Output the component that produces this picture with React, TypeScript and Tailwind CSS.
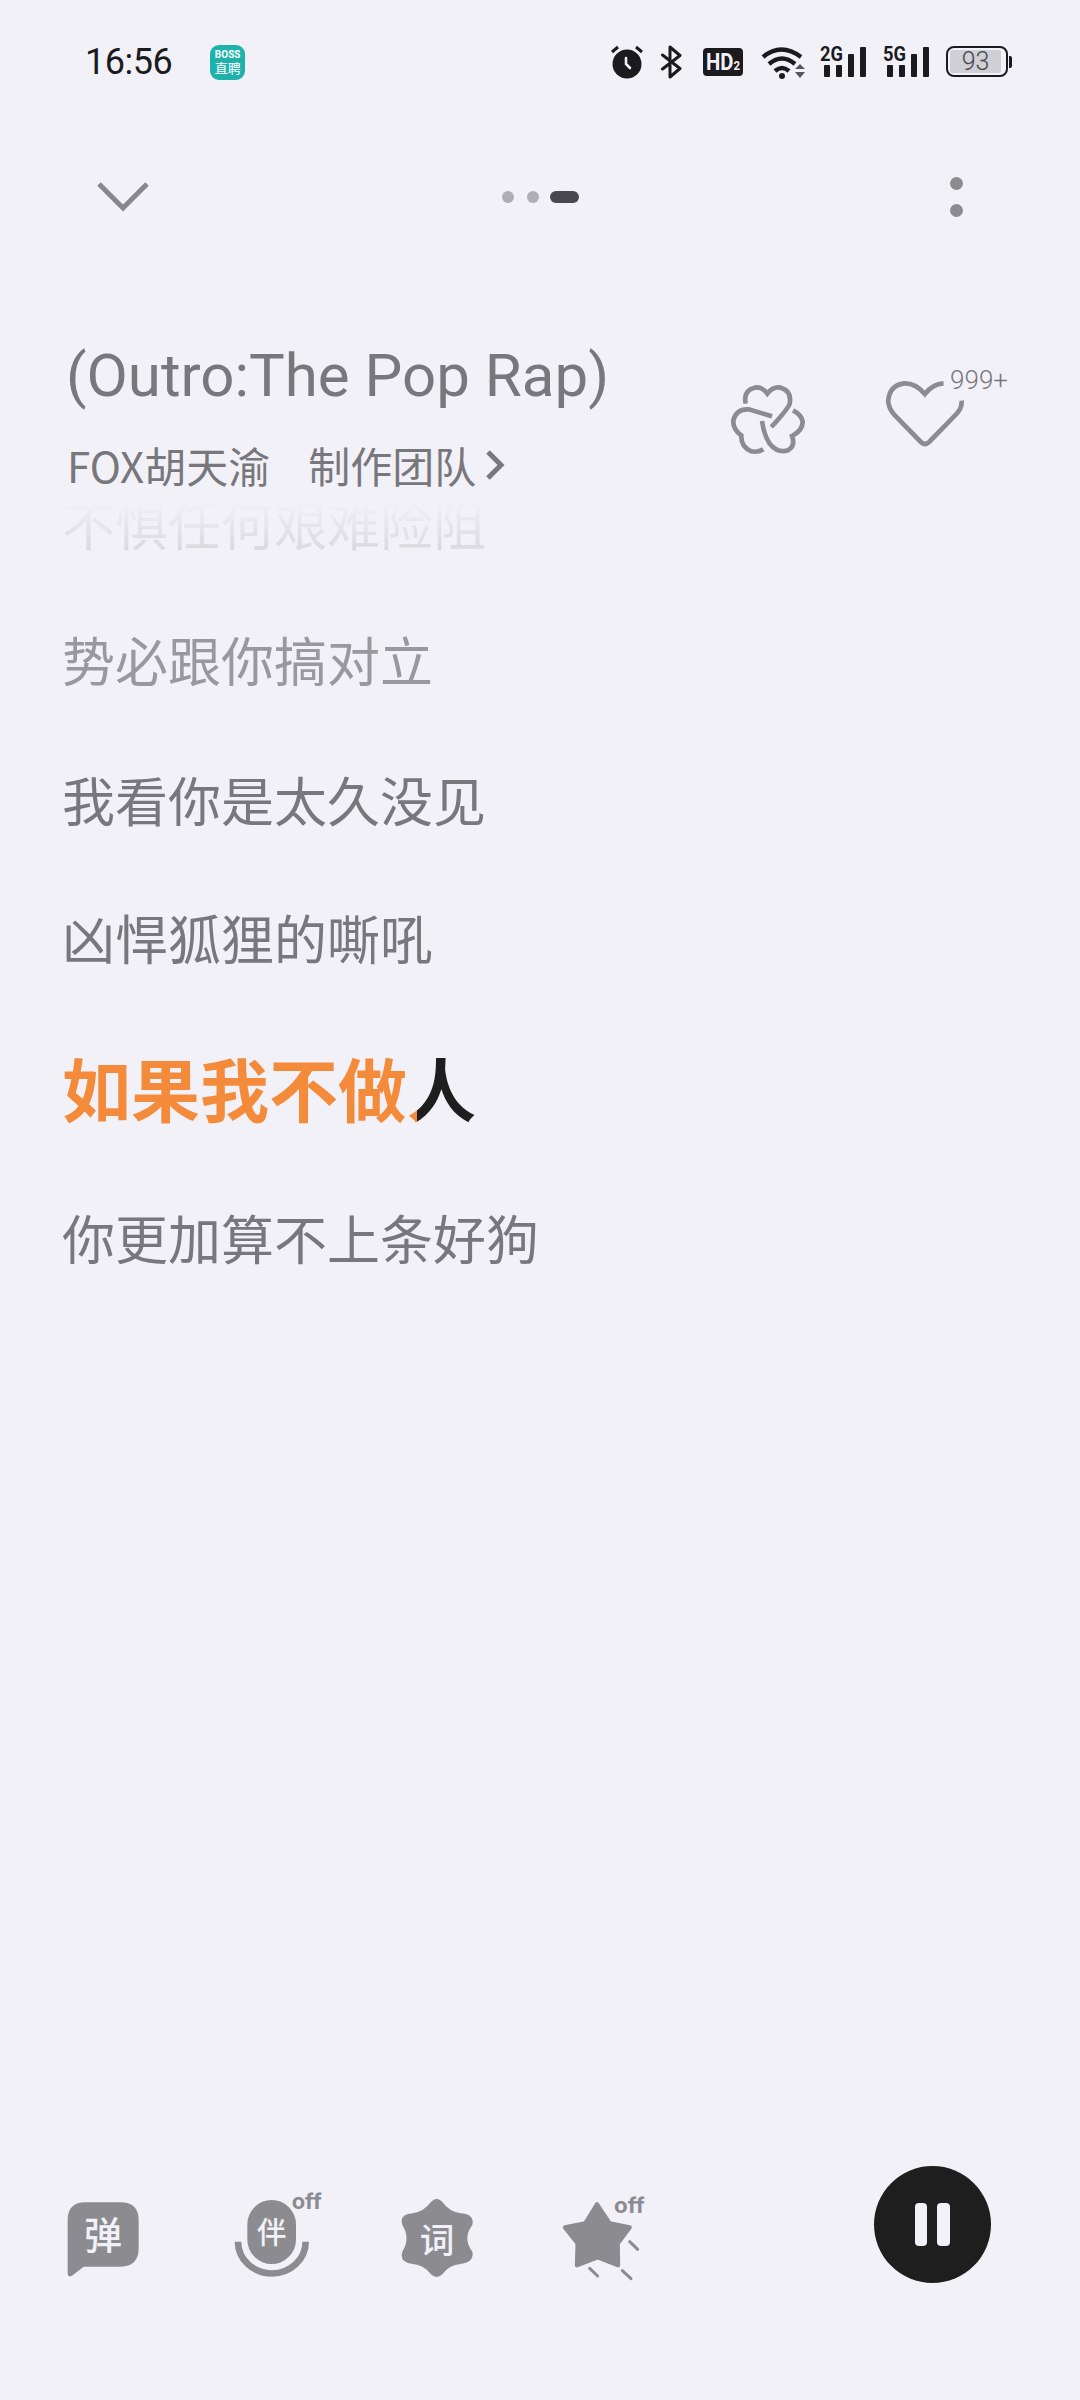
const cjk = '[font-family:"Noto_Sans_CJK_SC",Roboto,sans-serif]'

function Alarm() {
  return (
    <svg width="32" height="34" viewBox="0 0 32 34" fill="none">
      <circle cx="16" cy="19" r="14.5" fill="#1b1b1d" />
      <path d="M1 7 7 2M31 7 25 2" stroke="#1b1b1d" strokeWidth="3" />
      <path d="M15 13v6l4 4" stroke="#f2f1f8" strokeWidth="2.6" strokeLinecap="round" />
    </svg>
  )
}

function Bluetooth() {
  return (
    <svg width="21" height="34" viewBox="0 0 21 34" fill="none">
      <path d="M1.5 10 19 23.5 9 32V2l10 8.5L1.5 24" stroke="#1b1b1d" strokeWidth="3" strokeLinejoin="round" strokeLinecap="round" />
    </svg>
  )
}

function HdBadge() {
  return (
    <div className="w-[40px] h-[28px] rounded-[4px] bg-[#1b1b1d] flex items-center justify-center overflow-hidden">
      <svg width="40" height="28" viewBox="0 0 40 28">
        <text x="3" y="22" fontFamily="Roboto" fontWeight="700" fontSize="23" fill="#f2f1f8" textLength="34" lengthAdjust="spacingAndGlyphs">
          HD<tspan fontSize="13">2</tspan>
        </text>
      </svg>
    </div>
  )
}

function Wifi() {
  return (
    <svg width="45" height="34" viewBox="0 0 45 34" fill="none">
      <path d="M2 12Q20-3 40 12M8 19Q21 8 34 19M14 26Q21 20 28 26" stroke="#1b1b1d" strokeWidth="4.4" />
      <circle cx="21" cy="31" r="3" fill="#1b1b1d" />
      <path d="M34 24h10l-5-5zM34 27h10l-5 6z" fill="#56565a" />
    </svg>
  )
}

function Signal({ label }: { label: string }) {
  return (
    <svg className="overflow-visible" width="47" height="33" viewBox="0 0 47 33" fill="#1b1b1d">
      <text x="0" y="16" fontFamily="Roboto" fontWeight="700" fontSize="21" textLength="23" lengthAdjust="spacingAndGlyphs">{label}</text>
      <rect x="4" y="20" width="6" height="12" rx="1" />
      <rect x="16" y="20" width="6" height="12" rx="1" />
      <rect x="28" y="9" width="6" height="23" rx="1" />
      <rect x="40" y="2" width="6" height="30" rx="1" />
    </svg>
  )
}

function Battery() {
  return (
    <div className="flex items-center gap-[1px]">
      <div className="w-[62px] h-[31px] rounded-[8px] border-[2.5px] border-[#1b1b1d] p-[2px] flex">
        <div className="w-[51px] h-full rounded-[2px] bg-[#cfcfd6] flex items-center justify-center text-[25px] leading-none text-[#46464a] font-light [font-family:Roboto,sans-serif]">
          93
        </div>
      </div>
      <div className="w-[3px] h-[12px] rounded-r-[2px] bg-[#1b1b1d]" />
    </div>
  )
}

function Clover() {
  return (
    <svg width="80" height="75" viewBox="200 180 240 225" fill="none" stroke="#8b8b90" strokeWidth="14">
      <path d="M253 245Q245 205 280 197Q302 193 318 215Q335 193 358 197Q392 207 385 245Q382 258 330 315" />
      <path d="M332 283 262 262Q225 260 216 295Q214 322 240 340Q238 375 270 388Q290 392 306 382" />
      <path d="M302 297Q308 340 325 365Q350 395 380 385Q403 372 392 342Q425 325 424 298Q420 278 395 265" />
    </svg>
  )
}

function Heart() {
  return (
    <svg width="82" height="70" viewBox="670 170 245 210" fill="none" stroke="#8b8b90" strokeWidth="14">
      <path d="M848 186Q815 188 792 218Q765 185 730 186Q685 192 682 240Q684 262 700 280L780 362Q792 374 805 362L885 280Q905 260 902 238" />
    </svg>
  )
}

function Danmu() {
  return (
    <svg width="72" height="76" viewBox="110 186 216 228">
      <path d="M112 240Q112 187 165 187H270Q325 187 325 240V325Q325 380 270 380H160L125 407Q112 413 112 400Z" fill="#8b8b90" />
      <text x="218" y="328" textAnchor="middle" fontFamily="Noto Sans CJK SC" fontWeight="500" fontSize="114" fill="#f2f1f8">弹</text>
    </svg>
  )
}

function Mic() {
  return (
    <svg className="overflow-visible" width="88" height="88" viewBox="610 148 264 264" fill="none">
      <rect x="650" y="178" width="146" height="192" rx="73" fill="#8b8b90" />
      <path d="M622 303A101 95 0 0 0 825 303" stroke="#8b8b90" strokeWidth="20" />
      <text x="723" y="308" textAnchor="middle" fontFamily="Noto Sans CJK SC" fontWeight="500" fontSize="88" fill="#f2f1f8">伴</text>
      <text x="783" y="206" fontFamily="Inter" fontWeight="700" fontSize="66" fill="#8b8b90" textLength="90" lengthAdjust="spacingAndGlyphs">off</text>
    </svg>
  )
}

function Badge() {
  return (
    <svg width="72" height="80" viewBox="1111 174 216 240">
      <path d="M1200 187Q1218 165 1236 187Q1255 215 1290 220Q1332 222 1325 255Q1295 295 1325 335Q1332 368 1290 372Q1255 375 1236 402Q1218 420 1200 402Q1180 375 1146 372Q1105 368 1115 335Q1140 295 1115 255Q1105 222 1146 220Q1180 215 1200 187Z" fill="#8b8b90" />
      <text x="1219" y="338" textAnchor="middle" fontFamily="Noto Sans CJK SC" fontWeight="500" fontSize="104" fill="#f2f1f8">词</text>
    </svg>
  )
}

function Star() {
  return (
    <svg className="overflow-visible" width="84" height="87" viewBox="95 162 252 261" fill="none">
      <path d="M200 193 238 250 298 262 262 310 263 376 202 352 140 376 142 310 104 262 165 250Z" fill="#8b8b90" stroke="#8b8b90" strokeWidth="13" strokeLinejoin="round" />
      <path d="M298 305 322 328M178 385 202 408M276 392 302 416" stroke="#8b8b90" strokeWidth="9" strokeLinecap="round" />
      <text x="251" y="220" fontFamily="Inter" fontWeight="700" fontSize="66" fill="#8b8b90" textLength="92" lengthAdjust="spacingAndGlyphs">off</text>
    </svg>
  )
}

export default function App() {
  return (
    <div className={`w-[1080px] h-[2400px] bg-[#f2f1f8] flex flex-col overflow-hidden ${cjk}`}>
      {/* status bar */}
      <div className="h-[167px] pl-[85px] pr-[68px] pt-[44px] flex items-start justify-between">
        <div className="flex items-center h-[36px]">
          <span className="text-[36px] leading-none text-[#1b1b1d] tracking-[-0.5px] [font-family:Roboto,sans-serif]">16:56</span>
          <div className="ml-[38px] w-[35px] h-[35px] rounded-[9px] bg-[#1fb2ad] flex flex-col items-center justify-center text-white">
            <span className="text-[10px] leading-[11px] font-bold [font-family:Roboto,sans-serif]">BOSS</span>
            <span className="text-[13px] leading-[15px]">直聘</span>
          </div>
        </div>
        <div className="flex items-center h-[35px]">
          <Alarm />
          <div className="ml-[18px]"><Bluetooth /></div>
          <div className="ml-[21px]"><HdBadge /></div>
          <div className="ml-[18px]"><Wifi /></div>
          <div className="ml-[14px]"><Signal label="2G" /></div>
          <div className="ml-[16px]"><Signal label="5G" /></div>
          <div className="ml-[16px]"><Battery /></div>
        </div>
      </div>

      {/* top nav */}
      <div className="relative h-[60px] pl-[96px] pr-[117px] flex items-center justify-between">
        <svg width="54" height="32" viewBox="0 0 54 32" fill="none">
          <path d="M3 3 27 27 51 3" stroke="#87878c" strokeWidth="5" />
        </svg>
        <div className="absolute left-[502px] top-[24px] flex items-center gap-[13px]">
          <div className="w-[12px] h-[12px] rounded-full bg-[#aeaeb6]" />
          <div className="w-[12px] h-[12px] rounded-full bg-[#aeaeb6]" />
          <div className="-ml-[2px] w-[29px] h-[12px] rounded-full bg-[#48484e]" />
        </div>
        <div className="flex flex-col gap-[14px]">
          <div className="w-[13px] h-[13px] rounded-full bg-[#8b8b90]" />
          <div className="w-[13px] h-[13px] rounded-full bg-[#8b8b90]" />
        </div>
      </div>

      {/* song info */}
      <div className="h-[269px] pl-[67px] pr-[72px] flex justify-between items-start">
        <div className="pt-[109px]">
          <div className="-ml-[1px] text-[60px] leading-[80px] text-[#77777c] [font-family:Roboto,sans-serif]">(Outro:The Pop Rap)</div>
          <div className="mt-[23px] flex items-center text-[42px] leading-[52px] text-[#77777c]">
            <span>FOX胡天渝</span>
            <span className="ml-[38px]">制作团队</span>
            <svg className="ml-[9px]" width="20" height="32" viewBox="0 0 20 32" fill="none">
              <path d="M3 3 16 16 3 29" stroke="#77777c" strokeWidth="5" />
            </svg>
          </div>
        </div>
        <div className="pt-[143px] flex items-start">
          <div className="mt-[12px]"><Clover /></div>
          <div className="ml-[76px] mt-[8px]"><Heart /></div>
          <span className="-ml-[16px] -mt-[3px] text-[26px] leading-[26px] text-[#77777c] [font-family:Roboto,sans-serif] font-light">999+</span>
        </div>
      </div>

      {/* lyrics */}
      <div className="pl-[62px] text-[#77777c]">
        <div className="h-[55px] text-[53px] leading-[55px] bg-[linear-gradient(180deg,#f2f1f8_10%,#d8d8dd)] bg-clip-text text-transparent w-fit">不惧任何艰难险阻</div>
        <div className="mt-[38px] text-[53px] leading-[140px] text-[#98989d]">势必跟你搞对立</div>
        <div className="text-[53px] leading-[140px]">我看你是太久没见</div>
        <div className="text-[53px] leading-[136px]">凶悍狐狸的嘶吼</div>
        <div className="text-[69px] leading-[164px] font-semibold w-fit bg-[linear-gradient(90deg,#f48b3a_355px,#1e1e1e_355px)] bg-clip-text text-transparent">如果我不做人</div>
        <div className="text-[53px] leading-[136px]">你更加算不上条好狗</div>
      </div>

      {/* bottom controls */}
      <div className="mt-auto mb-[117px] h-[117px] pl-[67px] flex items-start">
        <div className="mt-[36px]"><Danmu /></div>
        <div className="ml-[95px] mt-[24px]"><Mic /></div>
        <div className="ml-[79px] mt-[32px]"><Badge /></div>
        <div className="ml-[89px] mt-[28px]"><Star /></div>
        <div className="ml-[228px] w-[117px] h-[117px] rounded-full bg-[#1e1e1e] flex items-center justify-center gap-[10px]">
          <div className="w-[12px] h-[43px] rounded-[4px] bg-[#f2f1f8]" />
          <div className="w-[13px] h-[43px] rounded-[4px] bg-[#f2f1f8]" />
        </div>
      </div>
    </div>
  )
}
